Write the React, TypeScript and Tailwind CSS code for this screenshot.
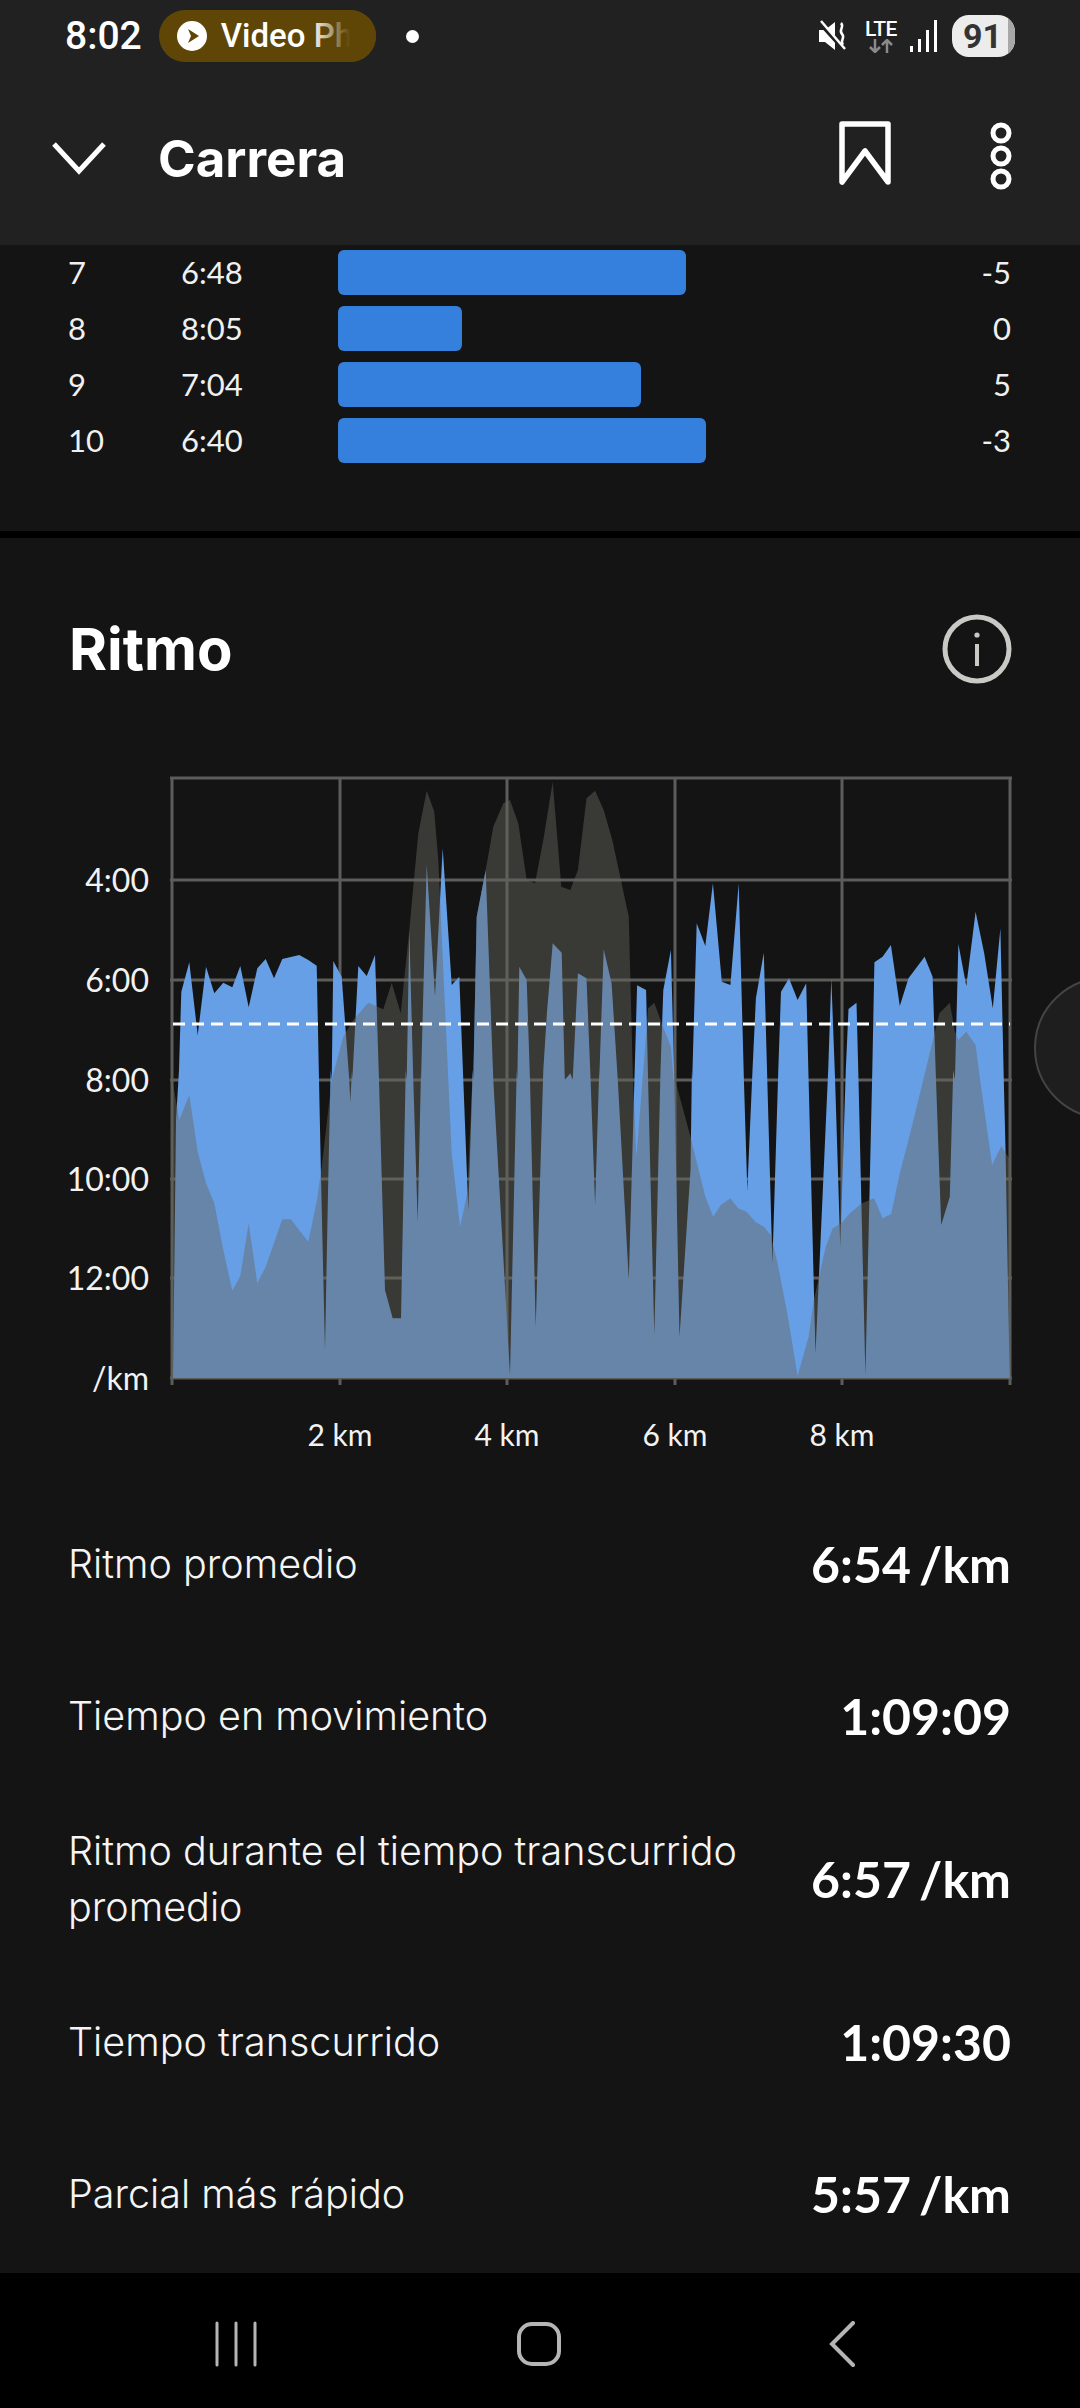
const FONT = "font-['Lato','Noto_Sans',sans-serif]";
const HEAD = "font-['Inter','Liberation_Sans',sans-serif]";
const STATUS = "font-['Roboto','Liberation_Sans',sans-serif]";

const splits = [
  { n: "7", pace: "6:48", w: 348, d: "-5" },
  { n: "8", pace: "8:05", w: 124, d: "0" },
  { n: "9", pace: "7:04", w: 303, d: "5" },
  { n: "10", pace: "6:40", w: 368, d: "-3" },
];

const stats = [
  { label: "Ritmo promedio", value: "6:54 /km" },
  { label: "Tiempo en movimiento", value: "1:09:09" },
  { label: "Ritmo durante el tiempo transcurrido promedio", value: "6:57 /km" },
  { label: "Tiempo transcurrido", value: "1:09:30" },
  { label: "Parcial más rápido", value: "5:57 /km" },
];

// chart outlines, traced per quadrant of the plot
type P = [number, number];
const tl = (p: P[]) => p.map(([x, y]) => [60 + x / 3, 760 + y / 3]);
const bl = (p: P[]) => p.map(([x, y]) => [60 + x / 3, 1070 + y / 3]);
const tr = (p: P[]) => p.map(([x, y]) => [540 + x / 2.904, 760 + y / 3]);
const br = (p: P[]) => p.map(([x, y]) => [540 + x / 2.904, 1070 + y / 3]);
const toPoints = (p: number[][]) => p.map(([x, y]) => `${x.toFixed(1)},${y.toFixed(1)}`).join(" ");

const bluePts = toPoints([
  [173, 1378],
  ...bl([[348, 150], [357, 0]]),
  ...tl([[364, 695], [388, 607], [413, 825], [438, 620], [463, 700], [490, 668], [517, 682], [541, 618], [566, 742], [592, 625], [617, 597], [642, 655], [667, 597], [718, 585], [745, 600], [770, 617], [777, 960]]),
  ...bl([[783, 320], [795, 840], [805, 320], [812, 0]]),
  ...tl([[815, 960], [820, 603], [845, 650], [868, 960]]),
  ...bl([[871, 95], [876, 0]]),
  ...tl([[877, 960], [895, 618], [920, 648], [945, 585], [957, 960]]),
  ...bl([[965, 320], [975, 660], [998, 745], [1023, 745], [1037, 0]]),
  ...tl([[1040, 960], [1048, 510], [1060, 960]]),
  ...bl([[1073, 455], [1083, 0]]),
  ...tl([[1083, 960], [1100, 313], [1125, 708], [1148, 265], [1175, 675], [1198, 650], [1210, 960]]),
  ...bl([[1225, 420], [1238, 0]]),
  ...tl([[1240, 960], [1250, 470], [1277, 330], [1300, 960]]),
  ...bl([[1350, 915], [1370, 0]]),
  ...tl([[1372, 960], [1378, 620], [1400, 660], [1410, 960]]),
  ...bl([[1427, 770], [1450, 0]]),
  ...tr([[20, 760], [37, 550], [63, 578], [72, 960]]),
  ...br([[88, 10]]),
  ...tr([[95, 960], [110, 640], [135, 655], [147, 960]]),
  ...br([[160, 405], [172, 0]]),
  ...tr([[172, 960], [185, 568], [208, 670], [226, 960]]),
  ...br([[258, 630], [275, 0]]),
  ...tr([[282, 676], [308, 690], [314, 960]]),
  ...br([[332, 795], [350, 0]]),
  ...tr([[358, 690], [380, 570], [390, 960]]),
  ...br([[405, 800], [437, 300], [441, 0]]),
  ...tr([[442, 960], [455, 490], [480, 558], [502, 370], [528, 665], [553, 675], [577, 370], [592, 960]]),
  ...br([[602, 360], [617, 0]]),
  ...tr([[627, 715], [650, 578], [660, 960]]),
  ...br([[675, 580], [692, 0]]),
  ...tr([[700, 695], [723, 655], [748, 720], [773, 670], [780, 960]]),
  ...br([[800, 850], [837, 0]]),
  ...tr([[846, 655], [857, 960]]),
  ...br([[872, 530], [888, 0]]),
  ...tr([[896, 747], [919, 728], [925, 960]]),
  ...br([[945, 915], [965, 0]]),
  ...tr([[971, 607], [995, 590], [1019, 555], [1045, 738], [1070, 655], [1095, 620], [1117, 590], [1140, 650], [1150, 960]]),
  ...br([[1165, 465], [1190, 380], [1200, 0]]),
  ...tr([[1205, 960], [1215, 552], [1238, 678], [1265, 455], [1290, 580], [1315, 745], [1337, 505], [1347, 960]]),
  ...br([[1352, 250], [1364, 925]]),
  [1010, 1378],
]);

const grayPts = toPoints([
  [172, 1378],
  [172, 1078],
  ...bl([[358, 150], [388, 75], [413, 245], [438, 340], [463, 400], [490, 540], [517, 662], [541, 618], [566, 460], [592, 640], [617, 590], [667, 448], [692, 448], [745, 515], [770, 395], [785, 290], [815, 30]]),
  ...tl([[850, 830], [880, 780], [925, 728], [970, 748], [995, 668], [1022, 760], [1048, 510], [1075, 220], [1100, 92], [1123, 155], [1135, 300], [1165, 960]]),
  ...bl([[1175, 250], [1200, 470], [1222, 370], [1238, 0]]),
  ...tl([[1240, 960], [1250, 470], [1277, 330], [1300, 200], [1330, 130], [1350, 120], [1375, 190], [1400, 360], [1425, 370], [1450, 240]]),
  ...tr([[37, 65], [62, 380], [88, 390], [110, 330], [135, 115], [160, 92], [185, 150], [210, 240], [235, 360], [258, 470], [262, 640], [270, 960]]),
  ...br([[280, 260], [300, 0]]),
  ...tr([[314, 745], [332, 728], [350, 780], [380, 860], [388, 960]]),
  ...br([[395, 40], [437, 200], [480, 380], [503, 440], [525, 405], [553, 385], [575, 415], [600, 425], [625, 455], [650, 470], [670, 495], [690, 580], [720, 740], [748, 918], [780, 800], [795, 690], [815, 600], [830, 530], [850, 475], [875, 460], [900, 430], [935, 400], [970, 385], [995, 445], [1020, 432], [1045, 310], [1075, 190], [1120, 0]]),
  ...tr([[1160, 760], [1190, 728], [1205, 815], [1215, 840], [1238, 815], [1265, 855], [1278, 960]]),
  ...br([[1313, 285], [1340, 228], [1362, 265], [1364, 925]]),
  [1010, 1378],
]);

const vLines = [172, 340, 507, 675, 842, 1010];
const hLines = [778, 880, 980, 1080, 1179, 1278, 1378];
const yLabels = [
  { t: "4:00", y: 880 },
  { t: "6:00", y: 980 },
  { t: "8:00", y: 1080 },
  { t: "10:00", y: 1179 },
  { t: "12:00", y: 1278 },
  { t: "/km", y: 1378 },
];
const xLabels = [
  { t: "2 km", x: 340 },
  { t: "4 km", x: 507 },
  { t: "6 km", x: 675 },
  { t: "8 km", x: 842 },
];

function PaceChart() {
  return (
    <svg viewBox="0 760 1080 700" className="mt-[78px] block h-[700px] w-[1080px]">
      {hLines.map((y) => (
        <line key={y} x1="170" x2="1012" y1={y} y2={y} stroke="#5c5c5a" strokeWidth="3" />
      ))}
      {vLines.map((x) => (
        <line key={x} x1={x} x2={x} y1="777" y2="1385" stroke="#5c5c5a" strokeWidth="3" />
      ))}
      <polygon points={bluePts} fill="#669fe6" />
      <polygon points={grayPts} fill="#66665e" fillOpacity="0.45" />
      <line x1="173" x2="1010" y1="1024" y2="1024" stroke="#fff" strokeWidth="3" strokeDasharray="12 7" />
      {yLabels.map((l) => (
        <text key={l.t} x="149" y={l.y + 12} textAnchor="end" fill="#f2f2f2" fontSize="32" fontFamily="Lato, sans-serif">
          {l.t}
        </text>
      ))}
      {xLabels.map((l) => (
        <text key={l.t} x={l.x} y="1446" textAnchor="middle" fill="#f2f2f2" fontSize="30" fontFamily="Lato, sans-serif">
          {l.t}
        </text>
      ))}
    </svg>
  );
}

function StatusBar() {
  return (
    <div className={`flex h-[72px] items-center pl-[65px] pr-[65px] text-white ${STATUS}`}>
      <span className="text-[39px] font-medium leading-none">8:02</span>
      <div className="relative ml-[17px] flex h-[52px] w-[217px] items-center overflow-hidden rounded-full bg-[#5f4606] pl-[18px]">
        <svg viewBox="0 0 30 30" className="h-[30px] w-[30px] shrink-0">
          <circle cx="15" cy="15" r="15" fill="#fff" />
          <path d="M11 8l11 7-11 7 3-7z" fill="#5f4606" />
        </svg>
        <span className="ml-[14px] whitespace-nowrap text-[33px] font-medium">Video Pho</span>
        <div className="absolute inset-y-0 right-0 w-[65px] bg-gradient-to-r from-transparent to-[#5f4606] to-60%" />
      </div>
      <div className="ml-[30px] h-[13px] w-[13px] rounded-full bg-white" />
      <div className="ml-auto flex items-center">
        <svg viewBox="0 0 30 36" className="h-[36px] w-[30px]">
          <path d="M1 12h6l10-8v28L7 24H1z" fill="#fff" />
          <path d="M1 4l26 29" stroke="#212121" strokeWidth="4" />
          <path d="M3 3l24 28" stroke="#fff" strokeWidth="2.5" />
          <path d="M23 5c4 4-3 7 1 11s-3 7 1 11" stroke="#fff" strokeWidth="2.5" fill="none" />
        </svg>
        <div className="ml-[16px] flex w-[34px] flex-col items-center">
          <span className="text-[21px] font-medium leading-[20px] tracking-tight">LTE</span>
          <svg viewBox="0 0 34 14" className="h-[14px] w-[34px]">
            <path d="M11 0v13M6 8l5 5 5-5M23 14V1M18 6l5-5 5 5" stroke="#8a8a8a" strokeWidth="2.5" fill="none" />
          </svg>
        </div>
        <svg viewBox="0 0 28 32" className="ml-[12px] h-[32px] w-[28px]">
          <rect x="0" y="26" width="3" height="6" fill="#fff" />
          <rect x="8" y="19" width="3" height="13" fill="#fff" />
          <rect x="16" y="10" width="3" height="22" fill="#fff" />
          <rect x="24" y="0" width="3" height="32" fill="#fff" />
        </svg>
        <div className="relative ml-[14px] flex h-[42px] w-[63px] items-center overflow-hidden rounded-[17px] bg-[#ececec] pl-[11px] text-[34px] font-bold leading-none text-[#333]">
          91
          <div className="absolute inset-y-0 right-0 w-[7px] bg-[#a8a8a8]" />
        </div>
      </div>
    </div>
  );
}

function Header() {
  return (
    <header className="h-[245px] shrink-0 bg-[#212121]">
      <StatusBar />
      <div className="flex h-[173px] items-start pt-[49px] text-white">
        <svg viewBox="0 0 54 34" className="ml-[52px] mt-[20px] h-[34px] w-[54px]">
          <path d="M2 3l25 27L52 3" stroke="#fff" strokeWidth="5" fill="none" />
        </svg>
        <h1 className={`ml-[52px] mt-[6px] text-[51px] font-bold leading-[64px] ${HEAD}`}>Carrera</h1>
        <svg viewBox="0 0 52 64" className="ml-auto h-[64px] w-[52px]">
          <path d="M3 3h46v58L26 30 3 61z" fill="none" stroke="#fff" strokeWidth="5.5" strokeLinejoin="round" />
        </svg>
        <svg viewBox="0 0 24 70" className="ml-[98px] mr-[67px] h-[70px] w-[24px]">
          <circle cx="12" cy="12" r="8" fill="none" stroke="#fff" strokeWidth="5" />
          <circle cx="12" cy="35" r="8" fill="none" stroke="#fff" strokeWidth="5" />
          <circle cx="12" cy="58" r="8" fill="none" stroke="#fff" strokeWidth="5" />
        </svg>
      </div>
    </header>
  );
}

function NavBar() {
  return (
    <nav className="flex h-[135px] shrink-0 items-center bg-black pl-[214px] pt-[6px]">
      <svg viewBox="0 0 44 46" className="h-[46px] w-[44px]">
        <path d="M3 2v42M22 2v42M41 2v42" stroke="#b5b5b5" strokeWidth="3" strokeLinecap="round" />
      </svg>
      <svg viewBox="0 0 46 46" className="ml-[258px] h-[46px] w-[46px]">
        <rect x="3" y="3" width="40" height="40" rx="13" fill="none" stroke="#b5b5b5" strokeWidth="4" />
      </svg>
      <svg viewBox="0 0 26 46" className="ml-[267px] h-[46px] w-[26px]">
        <path d="M24 2L3 23l21 21" stroke="#b5b5b5" strokeWidth="4" fill="none" strokeLinecap="round" />
      </svg>
    </nav>
  );
}

export default function App() {
  return (
    <div className={`relative flex h-[2408px] w-[1080px] flex-col overflow-hidden bg-[#141414] text-white ${FONT}`}>
      <Header />
      <main className="min-h-0 flex-1">
        <section className="flex flex-col gap-[11px] pb-[68px] pt-[5px]">
          {splits.map((s) => (
            <div key={s.n} className="flex h-[45px] items-center pl-[68px] pr-[69px] text-[31px] text-[#f0f0f0]">
              <span className="w-[113px]">{s.n}</span>
              <span className="w-[157px]">{s.pace}</span>
              <div className="h-[45px] rounded-[6px] bg-[#3580dd]" style={{ width: s.w }} />
              <span className="ml-auto">{s.d}</span>
            </div>
          ))}
        </section>
        <div className="h-[7px] bg-black" />
        <section>
          <div className="mt-[76px] flex h-[70px] items-center justify-between pl-[69px] pr-[68px]">
            <h2 className={`text-[58px] font-bold leading-none ${HEAD}`}>Ritmo</h2>
            <svg viewBox="0 0 70 70" className="h-[70px] w-[70px]">
              <circle cx="35" cy="35" r="32" fill="none" stroke="#c9c9c5" strokeWidth="5" />
              <path d="M35 30v22" stroke="#c9c9c5" strokeWidth="4" />
              <circle cx="35" cy="21" r="2.6" fill="#c9c9c5" />
            </svg>
          </div>
          <div className="-mt-[2px]">
            <PaceChart />
          </div>
          <dl className="pt-[28px]">
            {stats.map((s) => (
              <div key={s.label} className="flex min-h-[152px] items-center justify-between py-[31px] pl-[68px] pr-[69px]">
                <dt className={`w-[700px] text-[39.5px] font-light leading-[56px] text-[#f5f5f5] ${HEAD}`}>{s.label}</dt>
                <dd className="whitespace-nowrap text-[50px] font-bold leading-[56px] [word-spacing:-4px]">{s.value}</dd>
              </div>
            ))}
          </dl>
        </section>
      </main>
      <NavBar />
      <div className="absolute left-[1034px] top-[977px] h-[142px] w-[142px] rounded-full border-2 border-[#444] bg-[#1e1e1e]" />
    </div>
  );
}
